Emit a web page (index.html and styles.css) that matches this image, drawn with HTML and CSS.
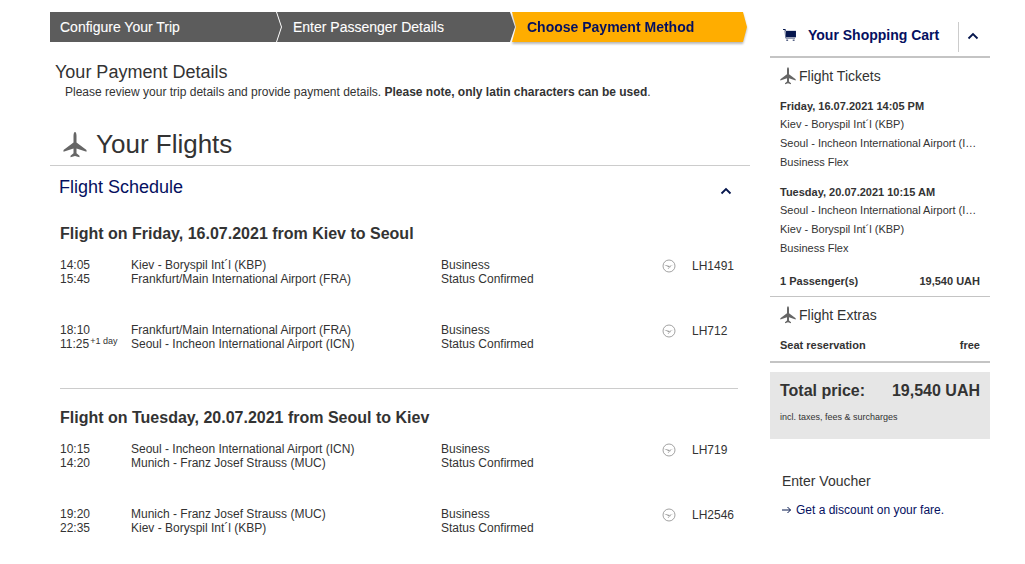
FILE: index.html
```html
<!DOCTYPE html>
<html lang="en">
<head>
<meta charset="utf-8">
<title>Your Payment Details</title>
<link rel="stylesheet" href="styles.css">
</head>
<body>
<svg class="defs" width="0" height="0" aria-hidden="true">
  <symbol id="plane" viewBox="0 0 24 26">
    <path d="M12 0c-1 0-1.500 2-1.500 4v6.500L.5 18v1.800l10-3.300v4.700l-3 2.500v1.500l4.500-1.300 4.500 1.300v-1.500l-3-2.500v-4.700l10 3.300V18l-10-7.500V4c0-2-.5-4-1.500-4z"/>
  </symbol>
  <symbol id="crane" viewBox="0 0 14 14">
    <circle cx="7" cy="7" r="6" fill="none" stroke="#8a8a8a" stroke-width=".8"/>
    <path d="M2 5.800 6.500 8 12 5.600 7.500 7z" fill="#8a8a8a"/>
    <path d="M6 10 7.500 8 9 7.500" fill="none" stroke="#8a8a8a" stroke-width=".6"/>
  </symbol>
  <symbol id="chev" viewBox="0 0 12 8">
    <path d="M1.500 6.500 6 2l4.500 4.500" fill="none" stroke="#05164d" stroke-width="1.800"/>
  </symbol>
</svg>
<div class="page">
  <main class="main">
    <nav class="steps">
      <div class="step step-one">Configure Your Trip</div>
      <div class="step step-two">Enter Passenger Details</div>
      <div class="step-wrap"><div class="step step-active">Choose Payment Method</div></div>
    </nav>

    <h1 class="page-title">Your Payment Details</h1>
    <p class="intro">Please review your trip details and provide payment details. <b>Please note, only latin characters can be used</b>.</p>

    <h2 class="flights-title"><svg class="flights-icon"><use href="#plane"/></svg>Your Flights</h2>

    <div class="schedule-head">
      <span>Flight Schedule</span>
      <svg class="schedule-chev"><use href="#chev"/></svg>
    </div>

    <section class="bound">
      <h3 class="bound-title">Flight on Friday, 16.07.2021 from Kiev to Seoul</h3>
      <div class="leg">
        <div class="times">14:05<br>15:45</div>
        <div class="route">Kiev - Boryspil Int´l (KBP)<br>Frankfurt/Main International Airport (FRA)</div>
        <div class="cabin">Business<br>Status Confirmed</div>
        <svg class="crane"><use href="#crane"/></svg>
        <div class="number">LH1491</div>
      </div>
      <div class="leg">
        <div class="times">18:10<br>11:25<sup>+1 day</sup></div>
        <div class="route">Frankfurt/Main International Airport (FRA)<br>Seoul - Incheon International Airport (ICN)</div>
        <div class="cabin">Business<br>Status Confirmed</div>
        <svg class="crane"><use href="#crane"/></svg>
        <div class="number">LH712</div>
      </div>
    </section>

    <section class="bound bound-second">
      <h3 class="bound-title">Flight on Tuesday, 20.07.2021 from Seoul to Kiev</h3>
      <div class="leg">
        <div class="times">10:15<br>14:20</div>
        <div class="route">Seoul - Incheon International Airport (ICN)<br>Munich - Franz Josef Strauss (MUC)</div>
        <div class="cabin">Business<br>Status Confirmed</div>
        <svg class="crane"><use href="#crane"/></svg>
        <div class="number">LH719</div>
      </div>
      <div class="leg">
        <div class="times">19:20<br>22:35</div>
        <div class="route">Munich - Franz Josef Strauss (MUC)<br>Kiev - Boryspil Int´l (KBP)</div>
        <div class="cabin">Business<br>Status Confirmed</div>
        <svg class="crane"><use href="#crane"/></svg>
        <div class="number">LH2546</div>
      </div>
    </section>
  </main>

  <aside class="cart">
    <div class="cart-head">
      <svg class="cart-icon" viewBox="0 0 14 13"><path d="M0 0h2.600l.6 1.800H2.200L1.800 1H0z" fill="#05164d"/><path d="M3 2h11v7H3z" fill="#05164d"/><path d="M2 1.500 3 10h10" fill="none" stroke="#5a6688" stroke-width="1"/><path d="M3.500 11.500h2v1.500h-2zM10.500 11.500h2v1.500h-2z" fill="#5a6688"/></svg>
      <span class="cart-title">Your Shopping Cart</span>
      <span class="cart-toggle"><svg class="cart-chev"><use href="#chev"/></svg></span>
    </div>

    <h4 class="cart-section"><svg class="section-icon"><use href="#plane"/></svg>Flight Tickets</h4>
    <div class="ticket">
      <div class="ticket-date">Friday, 16.07.2021 14:05 PM</div>
      <div class="ticket-line">Kiev - Boryspil Int´l (KBP)</div>
      <div class="ticket-line">Seoul - Incheon International Airport (I…</div>
      <div class="ticket-line">Business Flex</div>
    </div>
    <div class="ticket">
      <div class="ticket-date">Tuesday, 20.07.2021 10:15 AM</div>
      <div class="ticket-line">Seoul - Incheon International Airport (I…</div>
      <div class="ticket-line">Kiev - Boryspil Int´l (KBP)</div>
      <div class="ticket-line">Business Flex</div>
    </div>
    <div class="cart-row cart-row-pax"><span>1 Passenger(s)</span><span>19,540 UAH</span></div>

    <h4 class="cart-section"><svg class="section-icon"><use href="#plane"/></svg>Flight Extras</h4>
    <div class="cart-row cart-row-extra"><span>Seat reservation</span><span>free</span></div>

    <div class="total">
      <div class="total-row"><span>Total price:</span><span>19,540 UAH</span></div>
      <div class="total-note">incl. taxes, fees &amp; surcharges</div>
    </div>

    <h4 class="voucher-title">Enter Voucher</h4>
    <a class="voucher-link" href="#"><svg class="voucher-arrow" viewBox="0 0 10 8"><path d="M0 4h8.500M5.500 1l3 3-3 3" fill="none" stroke="#05164d" stroke-width="1"/></svg>Get a discount on your fare.</a>
  </aside>
</div>
</body>
</html>
```
FILE: styles.css
```css
* { box-sizing: border-box; }
html, body { margin: 0; padding: 0; }
body {
  font-family: "Liberation Sans", Arial, sans-serif;
  color: #333;
  background: #fff;
  font-size: 12px;
  overflow: hidden;
  height: 564px;
}
.defs { position: absolute; }
.page {
  display: flex;
  gap: 20px;
  padding: 12px 0 0 50px;
  width: 1025px;
}
.main { width: 700px; flex: none; }

.steps {
  display: flex;
  height: 30px;
  width: 697px;
  margin-bottom: 20px;
}
.step {
  height: 30px;
  line-height: 30px;
  font-size: 14px;
  color: #fff;
  background: #5c5c5c;
  -webkit-text-stroke: 0.1px #fff;
}
.step-one {
  width: 232px;
  padding-left: 10px;
  clip-path: polygon(0 0, 226px 0, 231px 15px, 226px 30px, 0 30px);
  margin-right: -5px;
}
.step-two {
  width: 240px;
  padding-left: 16px;
  clip-path: polygon(0 0, 233px 0, 238px 15px, 233px 30px, 0 30px, 5px 15px);
  margin-right: -5px;
}
.step-wrap {
  filter: drop-shadow(0 2px 1px rgba(0,0,0,.28));
  height: 30px;
}
.step-active {
  width: 235px;
  padding-left: 15px;
  background: #ffad00;
  color: #05105f;
  font-weight: bold;
  -webkit-text-stroke: 0;
  clip-path: polygon(0 0, 231px 0, 235px 15px, 231px 30px, 0 30px, 4px 15px);
}

.page-title {
  margin: 0 0 0 5px;
  font-size: 18px;
  font-weight: normal;
  line-height: 20px;
}
.intro {
  margin: 2px 0 0 15px;
  line-height: 16px;
  font-size: 12px;
}
.flights-title {
  display: flex;
  align-items: center;
  gap: 9px;
  margin: 20px 0 0;
  padding: 4px 0 0 13px;
  height: 46px;
  font-size: 26px;
  font-weight: normal;
  border-bottom: 1px solid #ccc;
}
.flights-icon { width: 24px; height: 26px; fill: #666; }
.schedule-head {
  display: flex;
  justify-content: space-between;
  align-items: center;
  height: 42px;
  padding: 0 18px 0 9px;
  font-size: 18px;
  color: #05105f;
}
.schedule-chev { width: 12px; height: 8px; margin-top: 8px; }

.bound { padding: 0 12px 0 10px; }
.bound-title {
  margin: 0;
  padding-top: 16px;
  height: 44px;
  font-size: 16px;
  line-height: 20px;
  font-weight: bold;
}
.leg {
  display: flex;
  height: 65px;
  line-height: 14px;
  padding-top: 6px;
}
.times { width: 71px; flex: none; white-space: nowrap; }
.times sup { font-size: 9px; line-height: 0; vertical-align: 4px; margin-left: 1px; }
.route { width: 310px; flex: none; }
.cabin { width: 221px; flex: none; }
.crane { width: 14px; height: 14px; flex: none; margin-top: 1px; }
.number { margin-left: 16px; padding-top: 1px; }
.bound-second {
  margin-top: 6px;
}
.bound-second::before {
  content: "";
  display: block;
  height: 1px;
  background: #ccc;
}
.bound-second .bound-title { padding-top: 19px; height: 47px; }

.cart { width: 220px; flex: none; }
.cart-head {
  display: flex;
  align-items: center;
  height: 46px;
  border-bottom: 2px solid #c4c4c4;
  padding: 2px 0 0 13px;
  color: #05105f;
}
.cart-icon { width: 13px; height: 12px; flex: none; margin-right: 12px; }
.cart-title { font-size: 14px; font-weight: bold; width: 150px; white-space: nowrap; }
.cart-toggle {
  display: flex;
  align-items: center;
  justify-content: center;
  width: 29px;
  height: 30px;
  border-left: 1px solid #ccc;
  margin-top: 4px;
  padding-bottom: 2px;
}
.cart-chev { width: 12px; height: 8px; }
.cart-section {
  display: flex;
  align-items: center;
  gap: 3px;
  margin: 0 0 2.67px;
  padding-left: 10px;
  height: 36px;
  font-size: 14px;
  font-weight: normal;
}
.section-icon { width: 16px; height: 18px; fill: #666; flex: none; }
.ticket {
  padding: 0 10px;
  font-size: 11px;
  margin-bottom: 11.33px;
}
.ticket-date { font-weight: bold; line-height: 18.67px; }
.ticket-line {
  line-height: 18.67px;
  white-space: nowrap;
}
.cart-row {
  display: flex;
  justify-content: space-between;
  padding: 0 10px;
  font-size: 11px;
  font-weight: bold;
  line-height: 16px;
}
.cart-row-pax {
  height: 28.33px;
  padding-top: 4px;
  border-bottom: 1px solid #c4c4c4;
}
.cart-row-extra {
  height: 27.33px;
  padding-top: 1.33px;
  border-bottom: 2px solid #c4c4c4;
}
.total {
  margin-top: 9px;
  height: 67px;
  background: #e6e6e6;
  padding: 9px 10px 0;
}
.total-row {
  display: flex;
  justify-content: space-between;
  font-size: 16px;
  font-weight: bold;
  line-height: 20px;
}
.total-note { font-size: 9px; margin-top: 10px; line-height: 12px; }
.voucher-title {
  margin: 33px 0 0 12px;
  font-size: 14px;
  font-weight: normal;
  line-height: 18px;
}
.voucher-link {
  display: flex;
  align-items: center;
  gap: 4px;
  margin: 12px 0 0 12px;
  color: #05105f;
  text-decoration: none;
  line-height: 16px;
}
.voucher-arrow { width: 10px; height: 8px; flex: none; }
```
